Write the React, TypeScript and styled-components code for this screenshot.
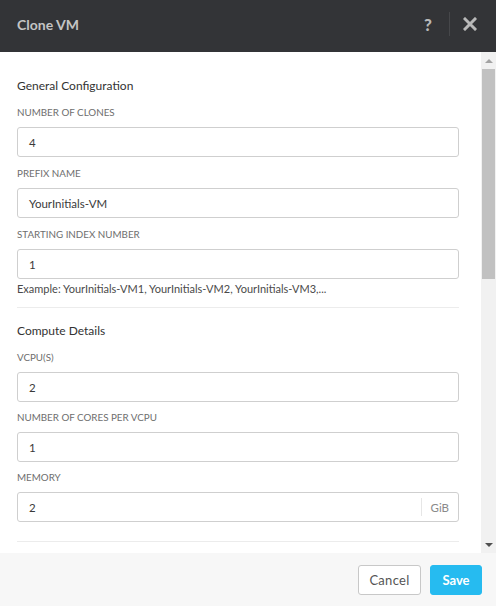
import React from 'react';
import styled, { createGlobalStyle } from 'styled-components';

const GlobalStyle = createGlobalStyle`
  html, body {
    margin: 0;
    padding: 0;
    background: #ffffff;
  }
  body {
    font-family: 'Lato', 'Open Sans', sans-serif;
  }
  * {
    box-sizing: border-box;
  }
`;

type FieldProps = {
  label: string;
  value: string;
  unit?: string;
  hint?: string;
};

const Field = (props: FieldProps) => {
  const {label, value, unit, hint} = props;
  return (
    <FieldGroup>
      <Label>{label}</Label>
      <InputBox>
        <InputValue>{value}</InputValue>
        {unit && <Unit>{unit}</Unit>}
      </InputBox>
      {hint && <Hint>{hint}</Hint>}
    </FieldGroup>
  );
};

const App = () => {
  return (
    <>
      <GlobalStyle />
      <Modal>
        <Header>
          <Title>Clone VM</Title>
          <HeaderActions>
            <HeaderIcon>?</HeaderIcon>
            <HeaderDivider />
            <HeaderIcon>
              <svg width="14" height="14" viewBox="0 0 14 14">
                <path d="M2 2 L12 12 M12 2 L2 12" stroke="#b9b9b9" strokeWidth="3" strokeLinecap="square" />
              </svg>
            </HeaderIcon>
          </HeaderActions>
        </Header>
        <Body>
          <Content>
            <Section $gap={8} $pad={11}>
              <SectionTitle>General Configuration</SectionTitle>
              <Field label="Number of clones" value="4" />
              <Field label="Prefix name" value="YourInitials-VM" />
              <Field
                label="Starting index number"
                value="1"
                hint="Example: YourInitials-VM1, YourInitials-VM2, YourInitials-VM3,..."
              />
            </Section>
            <Section $gap={7} $pad={12}>
              <SectionTitle>Compute Details</SectionTitle>
              <Field label="vCPU(s)" value="2" />
              <Field label="Number of cores per vCPU" value="1" />
              <Field label="Memory" value="2" unit="GiB" />
            </Section>
          </Content>
          <ScrollRail>
            <ScrollArrow $up />
            <ScrollTrack>
              <ScrollThumb />
            </ScrollTrack>
            <ScrollArrow />
          </ScrollRail>
        </Body>
        <Footer>
          <CancelButton>Cancel</CancelButton>
          <SaveButton>Save</SaveButton>
        </Footer>
      </Modal>
    </>
  );
};

export default App;

const Modal = styled.div`
  width: 496px;
  height: 606px;
  display: flex;
  flex-direction: column;
  background: #fff;
  overflow: hidden;
`;

const Header = styled.div`
  height: 52px;
  flex-shrink: 0;
  background: #333437;
  display: flex;
  align-items: center;
  justify-content: space-between;
  padding: 0 17px;
`;

const Title = styled.div`
  font-family: 'Lato', sans-serif;
  font-weight: 700;
  font-size: 14px;
  color: #c4c4c4;
  margin-top: -4px;
`;

const HeaderActions = styled.div`
  display: flex;
  align-items: center;
  margin-top: -4px;
  margin-right: -1px;
`;

const HeaderIcon = styled.div`
  width: 20px;
  display: flex;
  align-items: center;
  justify-content: center;
  font-family: 'Lato', sans-serif;
  font-weight: 900;
  font-size: 17px;
  color: #b9b9b9;
`;

const HeaderDivider = styled.div`
  width: 1px;
  height: 24px;
  background: #46474a;
  margin: 0 10px 0 11px;
`;

const Body = styled.div`
  flex: 1;
  display: flex;
  min-height: 0;
`;

const Content = styled.div`
  flex: 1;
  overflow: hidden;
  padding: 25px 22px 0 17px;
`;

const FieldGroup = styled.div`
  margin-bottom: 8px;
`;

const Section = styled.div<{ $gap: number; $pad: number }>`
  border-bottom: 1px solid #ececec;
  padding-bottom: ${p => p.$pad}px;
  margin-bottom: 14px;
  & > ${FieldGroup} {
    margin-bottom: ${p => p.$gap}px;
  }
`;

const SectionTitle = styled.div`
  font-size: 12px;
  line-height: 18px;
  color: #333;
  margin-bottom: 9px;
`;

const Label = styled.div`
  font-size: 9.8px;
  line-height: 16px;
  text-transform: uppercase;
  color: #6e6e6e;
  margin-bottom: 7px;
`;

const InputBox = styled.div`
  height: 30px;
  border: 1px solid #cfcfcf;
  border-radius: 3px;
  display: flex;
  align-items: center;
  padding-left: 11px;
`;

const InputValue = styled.div`
  flex: 1;
  font-size: 11.5px;
  color: #3a3a3a;
`;

const Unit = styled.div`
  display: flex;
  align-items: center;
  border-left: 1px solid #e6e6e6;
  height: 18px;
  padding: 0 9px 0 9px;
  font-size: 11.5px;
  color: #8a8a8a;
`;

const Hint = styled.div`
  font-size: 11px;
  line-height: 16px;
  color: #4a4a4a;
  margin-top: 2px;
  margin-bottom: -9px;
`;

const ScrollRail = styled.div`
  width: 15px;
  flex-shrink: 0;
  background: #f1f1f1;
  display: flex;
  flex-direction: column;
`;

const ScrollArrow = styled.div<{ $up?: boolean }>`
  height: 17px;
  display: flex;
  align-items: center;
  justify-content: center;
  &::after {
    content: '';
    width: 0;
    height: 0;
    border-left: 4px solid transparent;
    border-right: 4px solid transparent;
    ${p => (p.$up ? 'border-bottom: 4px solid #a3a3a3;' : 'border-top: 4px solid #505050;')}
  }
`;

const ScrollTrack = styled.div`
  flex: 1;
  padding: 0 1px;
`;

const ScrollThumb = styled.div`
  height: 210px;
  background: #c1c1c1;
`;

const Footer = styled.div`
  height: 53px;
  flex-shrink: 0;
  background: #f7f7f7;
  display: flex;
  align-items: center;
  justify-content: flex-end;
  gap: 9px;
  padding: 0 14px 0 0;
`;

const BaseButton = styled.button`
  height: 30px;
  border-radius: 3px;
  font-family: 'Lato', sans-serif;
  font-size: 13px;
  cursor: pointer;
`;

const CancelButton = styled(BaseButton)`
  width: 63px;
  background: #fff;
  border: 1px solid #c8c8c8;
  color: #555;
  letter-spacing: 0.3px;
`;

const SaveButton = styled(BaseButton)`
  width: 52px;
  background: #26bbf0;
  border: 1px solid #26bbf0;
  color: #fff;
  font-weight: 700;
`;
